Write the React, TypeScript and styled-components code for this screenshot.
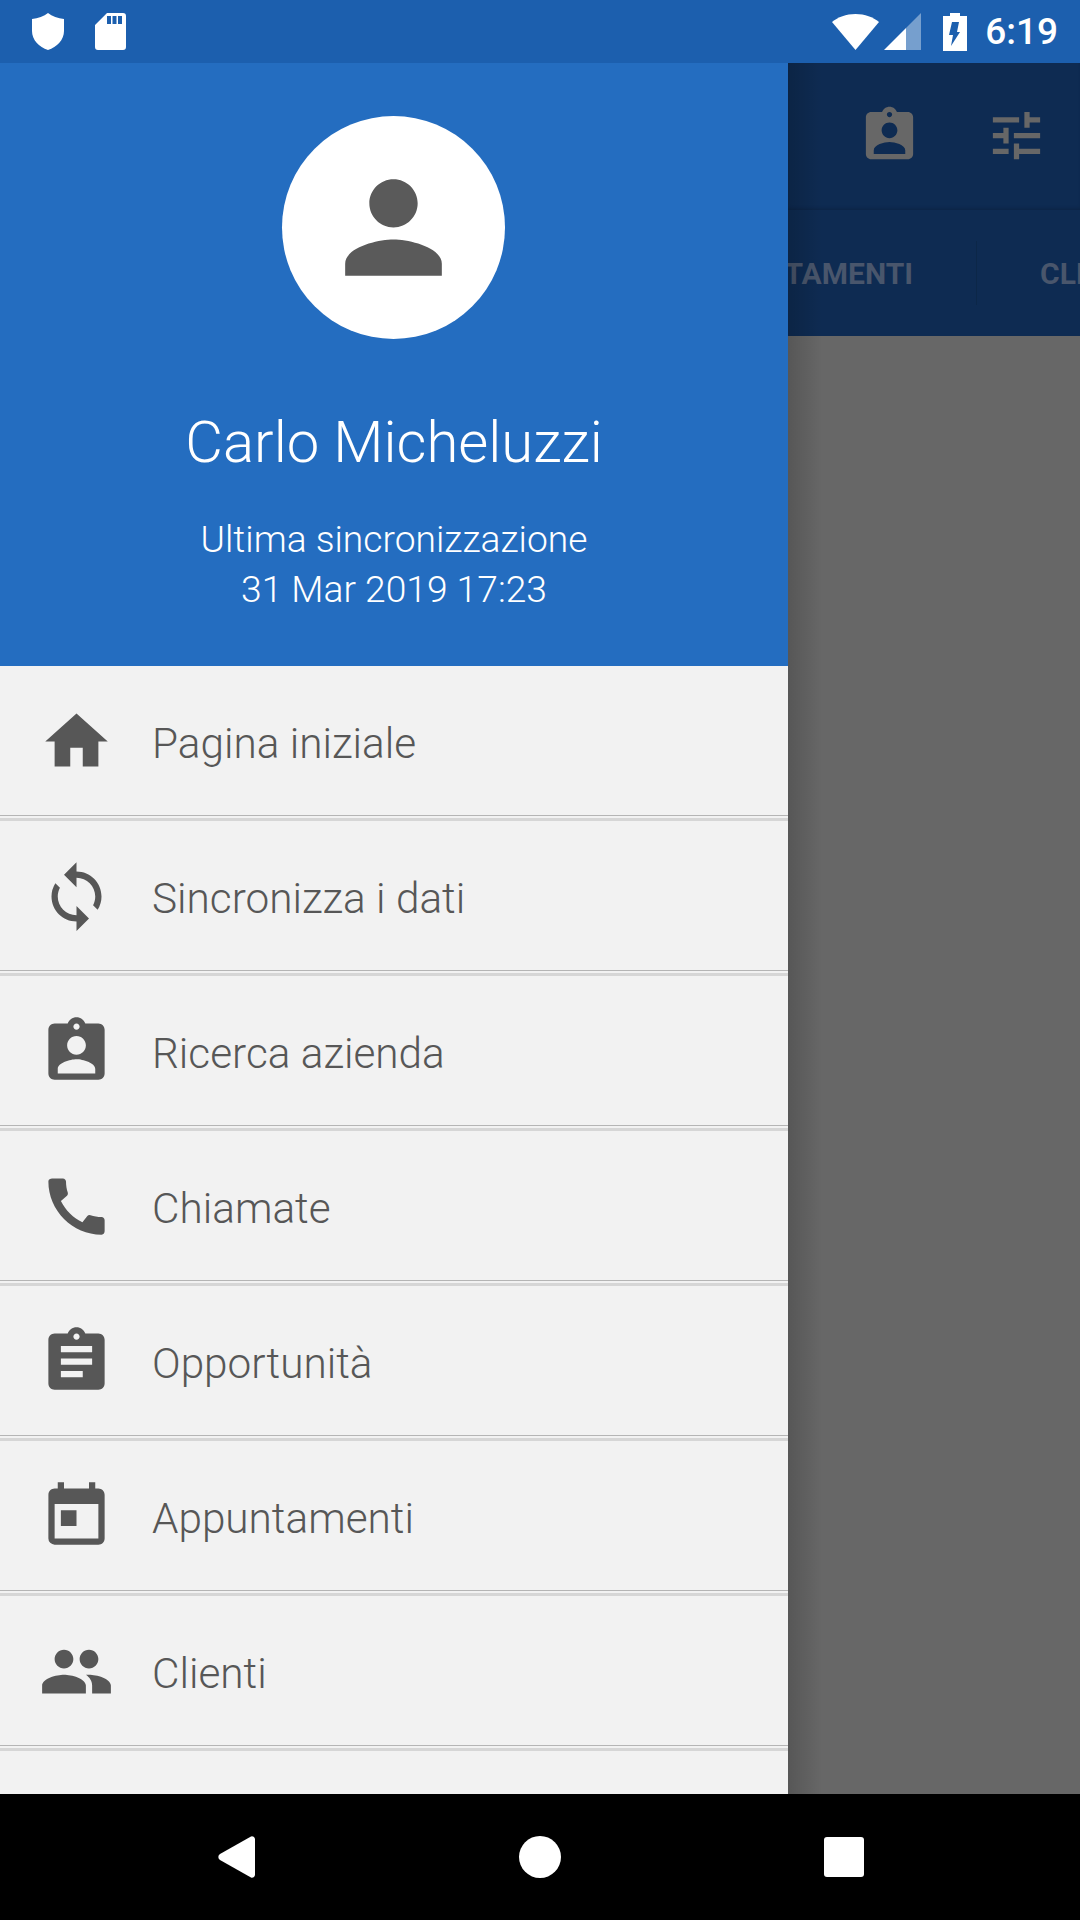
import React from 'react';
import styled, { createGlobalStyle } from 'styled-components';
import {
  MdHome,
  MdSync,
  MdAssignmentInd,
  MdCall,
  MdAssignment,
  MdToday,
  MdPeople,
  MdPerson,
  MdTune,
} from 'react-icons/md';

const GlobalStyle = createGlobalStyle`
  html, body {
    margin: 0;
    padding: 0;
    background: #000;
  }
  body {
    font-family: Roboto, "Liberation Sans", sans-serif;
  }
`;

const Screen = styled.div`
  width: 1080px;
  height: 1920px;
  display: flex;
  flex-direction: column;
  overflow: hidden;
`;

const StatusBar = styled.div`
  height: 63px;
  flex: none;
  background: #1c5fae;
  display: flex;
  align-items: center;
  justify-content: space-between;
  padding: 0 22px 0 32px;
  box-sizing: border-box;
`;

const StatusGroup = styled.div`
  display: flex;
  align-items: center;
`;

const StatusGlyph = styled.svg<{ $gap?: number }>`
  display: block;
  flex: none;
  fill: #fff;
  margin-right: ${({ $gap }) => $gap ?? 0}px;
`;

const Clock = styled.span`
  color: #fff;
  font-size: 37px;
  font-weight: 500;
  line-height: 63px;
  margin-left: 18px;
`;

const Body = styled.div`
  flex: 1;
  display: flex;
  min-height: 0;
`;

const Drawer = styled.div`
  width: 788px;
  flex: none;
  background: #f2f2f2;
  overflow: hidden;
`;

const Profile = styled.div`
  height: 603px;
  background: #246dc0;
  color: #fff;
  display: flex;
  flex-direction: column;
  align-items: center;
  padding-top: 53px;
  box-sizing: border-box;
`;

const Avatar = styled.div`
  width: 223px;
  height: 223px;
  margin-right: 1px;
  border-radius: 50%;
  background: #fff;
  color: #5a5a5a;
  display: flex;
  align-items: center;
  justify-content: center;
  font-size: 145px;
`;

const Name = styled.div`
  font-size: 58px;
  font-weight: 300;
  line-height: 66px;
  margin-top: 70px;
`;

const SyncInfo = styled.div`
  font-size: 37.2px;
  font-weight: 300;
  line-height: 50px;
  text-align: center;
  margin-top: 39px;
`;

const Row = styled.div`
  height: 149px;
  display: flex;
  align-items: center;
  padding: 2px 0 0 38.5px;
  box-sizing: border-box;
  color: #575757;
`;

const RowIcon = styled.div`
  width: 75px;
  height: 75px;
  font-size: 75px;
  display: flex;
  flex: none;
  margin-right: 38.5px;
`;

const RowLabel = styled.span`
  font-size: 42.3px;
  font-weight: 300;
  margin-top: 3px;
`;

const Divider = styled.div`
  height: 6px;
  box-sizing: border-box;
  border-top: 1px solid #b5b5b5;
  border-bottom: 3px solid #d6d6d6;
`;

const Scrim = styled.div`
  flex: 1;
  min-width: 0;
  display: flex;
  flex-direction: column;
  position: relative;
  background: #676767;
  &::after {
    content: '';
    position: absolute;
    top: 0;
    left: 0;
    bottom: 0;
    width: 34px;
    background: linear-gradient(to right, rgba(0, 0, 0, 0.16), rgba(0, 0, 0, 0));
  }
`;

const Toolbar = styled.div`
  height: 147px;
  background: #0e2b52;
  color: #676767;
  display: flex;
  align-items: center;
  font-size: 63px;
  padding-left: 70px;
  padding-bottom: 2px;
  box-sizing: border-box;
  box-shadow: inset 0 -3px 4px -2px rgba(0, 0, 0, 0.2);
`;

const ToolIcon = styled.div`
  margin-right: 64px;
  display: flex;
  flex: none;
`;

const Tabs = styled.div`
  height: 126px;
  background: #0e2b52;
  display: flex;
  align-items: center;
  overflow: hidden;
`;

const TabLabel = styled.span<{ $width: number; $align: string }>`
  width: ${({ $width }) => $width}px;
  flex: none;
  color: #49566c;
  font-size: 30px;
  font-weight: 700;
  white-space: nowrap;
  display: flex;
  justify-content: ${({ $align }) => $align};
`;

const TabRule = styled.div`
  width: 1px;
  height: 64px;
  background: #0c2748;
  margin: 0 63px;
  flex: none;
`;

const NavBar = styled.div`
  height: 126px;
  flex: none;
  background: #000;
  display: flex;
  align-items: center;
`;

const NavSlot = styled.div<{ $left: number }>`
  margin-left: ${({ $left }) => $left}px;
  display: flex;
`;

const NavSquare = styled.div`
  width: 40px;
  height: 40px;
  border-radius: 3px;
  background: #fff;
`;

const items = [
  { label: 'Pagina iniziale', Icon: MdHome },
  { label: 'Sincronizza i dati', Icon: MdSync },
  { label: 'Ricerca azienda', Icon: MdAssignmentInd },
  { label: 'Chiamate', Icon: MdCall },
  { label: 'Opportunità', Icon: MdAssignment },
  { label: 'Appuntamenti', Icon: MdToday },
  { label: 'Clienti', Icon: MdPeople },
];

const App: React.FC = () => {
  return (
    <Screen>
      <GlobalStyle />
      <StatusBar>
        <StatusGroup>
          <StatusGlyph $gap={31} width="32" height="37" viewBox="0 0 32 37">
            <path d="M16 0 C20 3 26 5.5 32 6 V18 C32 27 25 34 16 37 C7 34 0 27 0 18 V6 C6 5.5 12 3 16 0 Z" />
          </StatusGlyph>
          <StatusGlyph width="31" height="37" viewBox="0 0 31 37">
            <path
              fillRule="evenodd"
              d="M12 0 H28 A3 3 0 0 1 31 3 V34 A3 3 0 0 1 28 37 H3 A3 3 0 0 1 0 34 V12 Z M12 3 V11 H16 V3 Z M17.5 3 V11 H21.5 V3 Z M23 3 V11 H27 V3 Z"
            />
          </StatusGlyph>
        </StatusGroup>
        <StatusGroup>
          <StatusGlyph $gap={5} width="47" height="36" viewBox="0 0 47 36">
            <path d="M23.5 36 L0 8 C6 3 14 0 23.5 0 C33 0 41 3 47 8 Z" />
          </StatusGlyph>
          <StatusGlyph $gap={22} width="37" height="37" viewBox="0 0 37 37">
            <path d="M37 0 V37 H22 V15 Z" opacity="0.4" />
            <path d="M0 37 L22 15 V37 Z" />
          </StatusGlyph>
          <StatusGlyph width="24" height="38" viewBox="0 0 24 38">
            <path
              fillRule="evenodd"
              d="M7 0 H17 V3 H24 V38 H0 V3 H7 Z M9 9 H16 L14 19 H17 L8 33 L10 22 H6 Z"
            />
          </StatusGlyph>
          <Clock>6:19</Clock>
        </StatusGroup>
      </StatusBar>
      <Body>
        <Drawer>
          <Profile>
            <Avatar>
              <MdPerson />
            </Avatar>
            <Name>Carlo Micheluzzi</Name>
            <SyncInfo>
              Ultima sincronizzazione
              <br />
              31 Mar 2019 17:23
            </SyncInfo>
          </Profile>
          {items.map(({ label, Icon }) => (
            <React.Fragment key={label}>
              <Row>
                <RowIcon>
                  <Icon />
                </RowIcon>
                <RowLabel>{label}</RowLabel>
              </Row>
              <Divider />
            </React.Fragment>
          ))}
        </Drawer>
        <Scrim>
          <Toolbar>
            <ToolIcon>
              <MdAssignmentInd />
            </ToolIcon>
            <ToolIcon>
              <MdTune />
            </ToolIcon>
          </Toolbar>
          <Tabs>
            <TabLabel $width={125} $align="flex-end">
              TAMENTI
            </TabLabel>
            <TabRule />
            <TabLabel $width={60} $align="flex-start">
              CLIENTI
            </TabLabel>
          </Tabs>
        </Scrim>
      </Body>
      <NavBar>
        <NavSlot $left={218}>
          <svg width="37" height="42" viewBox="0 0 37 42" fill="#fff">
            <path d="M33 0.5 A3 3 0 0 1 37 3 V39 A3 3 0 0 1 33 41.5 L2 24 A3.5 3.5 0 0 1 2 18 Z" />
          </svg>
        </NavSlot>
        <NavSlot $left={264}>
          <svg width="42" height="42" viewBox="0 0 42 42" fill="#fff">
            <circle cx="21" cy="21" r="21" />
          </svg>
        </NavSlot>
        <NavSlot $left={263}>
          <NavSquare />
        </NavSlot>
      </NavBar>
    </Screen>
  );
};

export default App;
